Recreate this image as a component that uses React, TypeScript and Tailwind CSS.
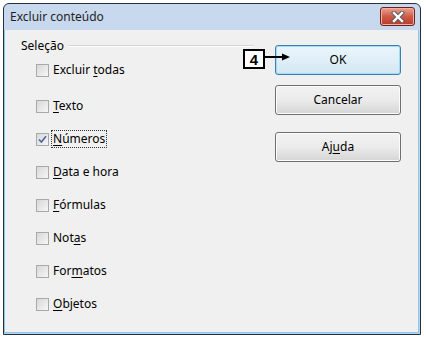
import type { ReactNode } from "react";

type Opt = { label: ReactNode; checked?: boolean; focused?: boolean };

const u = (c: string) => <span className="underline underline-offset-2">{c}</span>;

const options: Opt[] = [
  { label: <>Excluir {u("t")}odas</> },
  { label: <>{u("T")}exto</> },
  { label: <>{u("N")}úmeros</>, checked: true, focused: true },
  { label: <>{u("D")}ata e hora</> },
  { label: <>{u("F")}órmulas</> },
  { label: <>Not{u("a")}s</> },
  { label: <>For{u("m")}atos</> },
  { label: <>{u("O")}bjetos</> },
];

function CheckBox({ checked }: { checked?: boolean }) {
  return (
    <div className="flex h-[13px] w-[13px] items-center justify-center border border-[#a9a9a9] bg-gradient-to-br from-[#d8d8d8] to-[#f6f6f6]">
      {checked && (
        <svg width="9" height="9" viewBox="0 0 9 9">
          <path d="M1 4.5 L3.4 7 L8 1.2" fill="none" stroke="#4b63a3" strokeWidth="1.6" />
        </svg>
      )}
    </div>
  );
}

function Button({ children, primary }: { children: ReactNode; primary?: boolean }) {
  return (
    <div
      className={
        primary
          ? "flex h-[30px] w-[126px] items-center justify-center rounded-[3px] border border-[#3c7fb1] bg-gradient-to-b from-[#eaf6fd] via-[#e0eff8] to-[#d3e6f2] shadow-[inset_0_0_0_1px_#9fdcf8] text-[12px] text-black"
          : "flex h-[30px] w-[126px] items-center justify-center rounded-[3px] border border-[#707070] bg-gradient-to-b from-[#f2f2f2] via-[#ebebeb] to-[#d5d5d5] shadow-[inset_0_0_0_1px_#fcfcfc] text-[12px] text-black"
      }
    >
      {children}
    </div>
  );
}

export default function App() {
  return (
    <div className="relative h-[338px] w-[426px] bg-white p-[3px] font-['Noto_Sans',sans-serif] text-[12px] text-black">
      <div className="flex h-[332px] w-[418px] flex-col rounded-t-[6px] border border-[#26313c] bg-gradient-to-b from-[#c8d9ee] to-[#b9d1ea]">
        {/* title bar */}
        <div className="flex h-[26px] items-start justify-between pl-[6px] pr-[5px]">
          <span className="mt-[6px] leading-[14px] text-[#1e1e1e]">Excluir conteúdo</span>
          <div className="mt-[3px] flex h-[19px] w-[35px] items-center justify-center rounded-[3px] border border-[#6b2117] bg-gradient-to-b from-[#e8a493] via-[#cf5a48] to-[#b83a27] shadow-[inset_0_0_0_1px_#eeb3a5]">
            <svg width="14" height="12" viewBox="0 0 14 12">
              <path d="M3 2 L11 10 M11 2 L3 10" stroke="#5a5a5a" strokeWidth="4.4" strokeLinecap="square" />
              <path d="M3 2 L11 10 M11 2 L3 10" stroke="#ffffff" strokeWidth="2.4" strokeLinecap="square" />
            </svg>
          </div>
        </div>

        {/* client area */}
        <div className="mb-[1px] mr-[1px] flex flex-1 border-x border-b border-[#8cc7ec] bg-[#f0f0f0]">
          <div className="w-[270px] pl-[16px] pt-[8px]">
            <div className="flex h-[16px] items-center">
              <span className="leading-[16px]">Seleção</span>
              <div className="ml-[4px] h-[2px] w-[186px] border-t border-b border-t-[#d5d5d5] border-b-white" />
            </div>
            <div className="mt-[6px] flex flex-col gap-[13px] pl-[15px]">
              {options.map((o, i) => (
                <div key={i} className={`flex h-[20px] items-center ${i === 1 ? "mt-[3px]" : ""}`}>
                  <CheckBox checked={o.checked} />
                  <span
                    className={`ml-[2px] px-[1px] leading-[16px] ${
                      o.focused ? "border border-dotted border-[#333]" : "border border-transparent"
                    }`}
                  >
                    {o.label}
                  </span>
                </div>
              ))}
            </div>
          </div>
          <div className="flex flex-col pt-[15px]">
            <Button primary>OK</Button>
            <div className="mt-[10px]">
              <Button>Cancelar</Button>
            </div>
            <div className="mt-[17px]">
              <Button>
                Aj<span className="underline underline-offset-2">u</span>da
              </Button>
            </div>
          </div>
        </div>
      </div>

      {/* annotation */}
      <div className="absolute left-[243px] top-[49px] flex h-[20px] w-[22px] items-center justify-center border-2 border-black bg-white font-['Liberation_Sans',sans-serif] text-[15px] font-bold leading-none">
        4
      </div>
      <svg className="absolute left-[265px] top-[52px]" width="26" height="10" viewBox="0 0 26 10">
        <path d="M0 5 H18" stroke="black" strokeWidth="2" />
        <path d="M17 1.5 L25 5 L17 8.5 Z" fill="black" />
      </svg>
    </div>
  );
}
